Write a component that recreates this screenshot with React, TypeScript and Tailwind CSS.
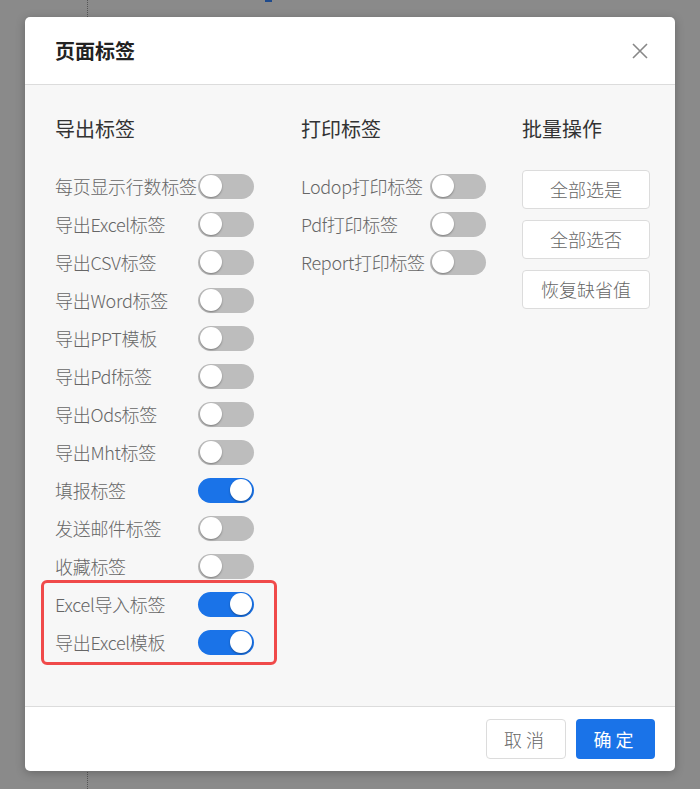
import type { ReactNode } from "react";

const EXPORT_TAGS: { label: string; on: boolean }[] = [
  { label: "每页显示行数标签", on: false },
  { label: "导出Excel标签", on: false },
  { label: "导出CSV标签", on: false },
  { label: "导出Word标签", on: false },
  { label: "导出PPT模板", on: false },
  { label: "导出Pdf标签", on: false },
  { label: "导出Ods标签", on: false },
  { label: "导出Mht标签", on: false },
  { label: "填报标签", on: true },
  { label: "发送邮件标签", on: false },
  { label: "收藏标签", on: false },
];

const HIGHLIGHTED_TAGS = [
  { label: "Excel导入标签", on: true },
  { label: "导出Excel模板", on: true },
];

const PRINT_TAGS = [
  { label: "Lodop打印标签", on: false },
  { label: "Pdf打印标签", on: false },
  { label: "Report打印标签", on: false },
];

const BATCH_ACTIONS = ["全部选是", "全部选否", "恢复缺省值"];

function Toggle({ on }: { on: boolean }) {
  return (
    <span
      className={`relative flex h-[25px] w-[56px] shrink-0 items-center rounded-full px-[2px] ${
        on ? "justify-end bg-[#1a73e8]" : "justify-start bg-[#bdbdbd]"
      }`}
    >
      <span className="size-[22px] rounded-full bg-white shadow-[0_1px_2px_rgba(0,0,0,0.35)]" />
    </span>
  );
}

function TagRow({
  label,
  on,
  labelWidth,
}: {
  label: string;
  on: boolean;
  labelWidth: string;
}) {
  return (
    <div className="flex h-[38px] items-center">
      <span
        className={`${labelWidth} shrink-0 whitespace-nowrap font-light text-[18px] text-[#666] tracking-[-0.3px]`}
      >
        {label}
      </span>
      <Toggle on={on} />
    </div>
  );
}

function ColumnTitle({ children }: { children: ReactNode }) {
  return (
    <h3 className="h-[28px] text-[20px] text-[#333] leading-[28px]">
      {children}
    </h3>
  );
}

export default function App() {
  return (
    <div
      className="relative h-[789px] w-[700px] overflow-hidden bg-[#8a8a8a]"
      style={{ fontFamily: '"Noto Sans CJK SC", "Noto Sans", sans-serif' }}
    >
      {/* page behind the mask */}
      <div className="absolute top-0 left-[87px] h-full border-[#555] border-l border-dotted" />
      <div className="absolute top-0 left-[265px] h-[2px] w-[7px] bg-[#1e4a8c]" />

      <div className="relative mx-[25px] mt-[17px] flex w-[650px] flex-col overflow-hidden rounded-[5px] bg-white shadow-[0_2px_10px_rgba(0,0,0,0.25)]">
        <header className="box-content flex h-[67px] items-center justify-between border-[#dcdcdc] border-b pr-[27px] pl-[30px]">
          <h2 className="font-bold text-[20px] text-[#222]">页面标签</h2>
          <svg
            aria-hidden="true"
            className="text-[#888]"
            fill="none"
            height="16"
            stroke="currentColor"
            strokeWidth="1.6"
            viewBox="0 0 16 16"
            width="16"
          >
            <path d="M1 1L15 15M15 1L1 15" />
          </svg>
        </header>

        <div className="flex bg-[#f7f7f7] pt-[30px] pb-[45px] pl-[30px]">
          <section className="w-[246px]">
            <ColumnTitle>导出标签</ColumnTitle>
            <div className="mt-[24px]">
              {EXPORT_TAGS.map((t) => (
                <TagRow key={t.label} label={t.label} labelWidth="w-[143px]" on={t.on} />
              ))}
              <div className="relative">
                <div className="pointer-events-none absolute top-[-5px] bottom-[-4px] left-[-14px] w-[236px] rounded-[6px] border-[3px] border-[#f04a4a]" />
                {HIGHLIGHTED_TAGS.map((t) => (
                  <TagRow key={t.label} label={t.label} labelWidth="w-[143px]" on={t.on} />
                ))}
              </div>
            </div>
          </section>

          <section className="w-[221px]">
            <ColumnTitle>打印标签</ColumnTitle>
            <div className="mt-[24px]">
              {PRINT_TAGS.map((t) => (
                <TagRow key={t.label} label={t.label} labelWidth="w-[129px]" on={t.on} />
              ))}
            </div>
          </section>

          <section className="w-[128px]">
            <ColumnTitle>批量操作</ColumnTitle>
            <div className="mt-[27px] flex flex-col gap-[11px]">
              {BATCH_ACTIONS.map((a) => (
                <button
                  className="h-[39px] w-full rounded-[4px] border border-[#dcdcdc] bg-white font-light text-[18px] text-[#666]"
                  key={a}
                  type="button"
                >
                  {a}
                </button>
              ))}
            </div>
          </section>
        </div>

        <footer className="box-content flex h-[64px] items-center justify-end gap-[10px] border-[#dcdcdc] border-t pr-[20px]">
          <button
            className="h-[40px] w-[80px] rounded-[4px] border border-[#dcdcdc] bg-white font-light text-[18px] text-[#666] tracking-[4px]"
            type="button"
          >
            取消
          </button>
          <button
            className="h-[40px] w-[79px] rounded-[4px] bg-[#1a73e8] text-[18px] text-white tracking-[4px]"
            type="button"
          >
            确定
          </button>
        </footer>
      </div>
    </div>
  );
}
